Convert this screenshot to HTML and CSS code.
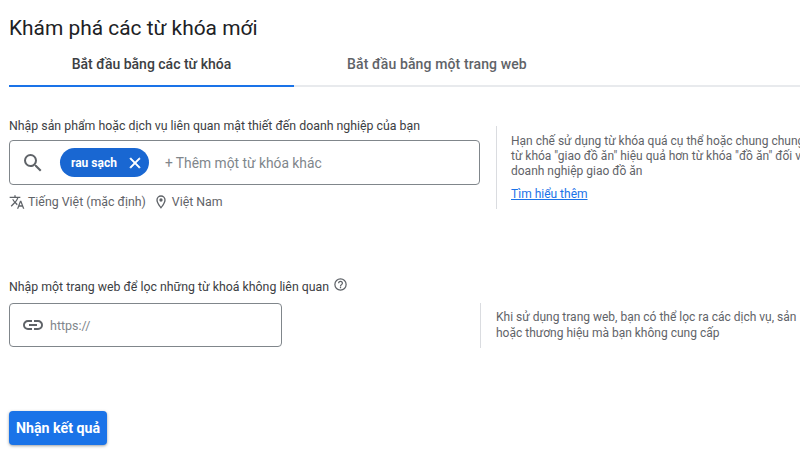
FILE: index.html
```html
<!DOCTYPE html>
<html lang="vi">
<head>
  <meta charset="UTF-8" />
  <title>Khám phá các từ khóa mới</title>
  <link rel="stylesheet" href="styles.css">
</head>
<body>
  <div class="page">
    <h1 class="title">Khám phá các từ khóa mới</h1>

    <div class="tabs">
      <div class="tab active">Bắt đầu bằng các từ khóa</div>
      <div class="tab">Bắt đầu bằng một trang web</div>
    </div>

    <section class="row row-keywords">
      <div class="col">
        <div class="label">Nhập sản phẩm hoặc dịch vụ liên quan mật thiết đến doanh nghiệp của bạn</div>
        <div class="field">
          <svg class="icon-search" viewBox="0 0 24 24" width="24" height="24">
            <path fill="#5f6368" d="M15.5 14h-.79l-.28-.27A6.47 6.47 0 0 0 16 9.5 6.5 6.5 0 1 0 9.5 16c1.61 0 3.09-.59 4.23-1.57l.27.28v.79l5 4.99L20.49 19l-4.99-5zm-6 0C7.01 14 5 11.99 5 9.5S7.01 5 9.5 5 14 7.01 14 9.5 11.99 14 9.5 14z"/>
          </svg>
          <span class="chip">
            rau sạch
            <svg viewBox="0 0 24 24" width="18" height="18">
              <path fill="#fff" stroke="#fff" stroke-width="0.8" d="M19 6.41 17.59 5 12 10.59 6.41 5 5 6.41 10.59 12 5 17.59 6.41 19 12 13.41 17.59 19 19 17.59 13.41 12z"/>
            </svg>
          </span>
          <span class="placeholder">+ Thêm một từ khóa khác</span>
        </div>
        <div class="meta">
          <svg viewBox="0 0 24 24" width="16" height="16">
            <path fill="#5f6368" d="m12.87 15.07-2.54-2.51.03-.03A17.52 17.52 0 0 0 14.07 6H17V4h-7V2H8v2H1v2h11.17C11.5 7.92 10.44 9.75 9 11.35 8.07 10.32 7.3 9.19 6.69 8h-2c.73 1.63 1.73 3.17 2.98 4.56l-5.09 5.02L4 19l5-5 3.11 3.11.76-2.04zM18.5 10h-2L12 22h2l1.12-3h4.75L21 22h2l-4.5-12zm-2.62 7 1.62-4.33L19.12 17h-3.24z"/>
          </svg>
          <span class="meta-text">Tiếng Việt (mặc định)</span>
          <svg class="icon-pin" viewBox="0 0 24 24" width="16" height="16">
            <path fill="#5f6368" d="M12 2a7 7 0 0 0-7 7c0 5.25 7 13 7 13s7-7.75 7-13a7 7 0 0 0-7-7zm0 17c-2-2.6-5-7-5-10a5 5 0 0 1 10 0c0 2.9-2.9 7.3-5 10zm0-12.5a2.5 2.5 0 1 0 0 5 2.5 2.5 0 0 0 0-5z"/>
          </svg>
          <span class="meta-text">Việt Nam</span>
        </div>
      </div>
      <aside class="hint hint-keywords">
        <div>Hạn chế sử dụng từ khóa quá cụ thể hoặc chung chung</div>
        <div>từ khóa "giao đồ ăn" hiệu quả hơn từ khóa "đồ ăn" đối v</div>
        <div>doanh nghiệp giao đồ ăn</div>
        <a class="more" href="#">Tìm hiểu thêm</a>
      </aside>
    </section>

    <section class="row row-site">
      <div class="col">
        <div class="label">
          Nhập một trang web để lọc những từ khoá không liên quan
          <svg class="icon-help" viewBox="0 0 24 24" width="15" height="15">
            <path fill="#5f6368" d="M11 18h2v-2h-2v2zm1-16a10 10 0 1 0 0 20 10 10 0 0 0 0-20zm0 18a8 8 0 1 1 0-16 8 8 0 0 1 0 16zm0-14a4 4 0 0 0-4 4h2a2 2 0 1 1 4 0c0 2-3 1.75-3 5h2c0-2.25 3-2.5 3-5a4 4 0 0 0-4-4z"/>
          </svg>
        </div>
        <div class="field field-site">
          <svg class="icon-link" viewBox="0 0 24 24" width="24" height="24">
            <path fill="#5f6368" d="M3.9 12c0-1.71 1.39-3.1 3.1-3.1h4V7H7a5 5 0 0 0 0 10h4v-1.9H7c-1.71 0-3.1-1.39-3.1-3.1zM8 13h8v-2H8v2zm9-6h-4v1.9h4c1.71 0 3.1 1.39 3.1 3.1s-1.39 3.1-3.1 3.1h-4V17h4a5 5 0 0 0 0-10z"/>
          </svg>
          <span class="placeholder">https://</span>
        </div>
      </div>
      <aside class="hint hint-site">
        <div>Khi sử dụng trang web, bạn có thể lọc ra các dịch vụ, sản</div>
        <div>hoặc thương hiệu mà bạn không cung cấp</div>
      </aside>
    </section>

    <button class="submit">Nhận kết quả</button>
  </div>
</body>
</html>
```

FILE: styles.css
```css
html, body {
  margin: 0;
  padding: 0;
  width: 100%;
  height: 100%;
  background: #fff;
  color: #3c4043;
  font-family: Roboto, "Noto Sans", sans-serif;
  overflow: hidden;
}

.page {
  padding: 14px 0 0 9px;
}

.title {
  margin: 0;
  font-size: 20.9px;
  line-height: 28px;
  font-weight: 400;
  color: #202124;
}

.tabs {
  display: flex;
  border-bottom: 2px solid #e8eaed;
  height: 43px;
}

.tab {
  height: 43px;
  line-height: 44px;
  font-size: 14px;
  font-weight: 500;
  letter-spacing: 0.12px;
  color: #5f6368;
  padding: 0 53px;
  white-space: nowrap;
}

.tab.active {
  width: 179px;
  letter-spacing: 0;
  color: #3c4043;
  border-bottom: 2px solid #1a73e8;
  text-align: center;
}

.row {
  display: flex;
}

.row-keywords {
  margin-top: 30px;
}

.row-site {
  margin-top: 67px;
}

.col {
  width: 471px;
  flex: none;
}

.label {
  font-size: 12.33px;
  line-height: 18px;
  color: #3c4043;
  white-space: nowrap;
}

.field {
  display: flex;
  align-items: center;
  box-sizing: border-box;
  height: 45px;
  margin-top: 5px;
  padding-left: 11px;
  border: 1px solid #80868b;
  border-radius: 4px;
}

.field-site {
  width: 273px;
  height: 44px;
  margin-top: 7px;
}

.chip {
  display: inline-flex;
  align-items: center;
  gap: 9px;
  height: 29px;
  margin-left: 15px;
  padding: 0 5px 0 11px;
  border-radius: 15px;
  background: #1967d2;
  color: #fff;
  font-size: 12px;
  font-weight: 700;
}

.placeholder {
  font-size: 13.8px;
  color: #80868b;
}

.chip + .placeholder {
  margin-left: 16px;
}

.icon-link + .placeholder {
  margin-left: 5px;
  font-size: 12.5px;
}

.meta {
  display: flex;
  align-items: center;
  margin-top: 8px;
  height: 18px;
}

.meta-text {
  font-size: 12.35px;
  color: #5f6368;
  margin-left: 3px;
}

.icon-pin {
  margin-left: 7px;
}

.icon-help {
  vertical-align: 2px;
  margin: -3px 0 -3px 1px;
}

.hint {
  font-size: 12px;
  line-height: 15px;
  color: #5f6368;
  white-space: nowrap;
  border-left: 1px solid #dadce0;
}

.hint-keywords {
  margin: 9px 0 0 16px;
  padding: 8px 0 8px 14px;
  height: 67px;
}

.hint-site {
  margin-top: 25px;
  padding: 6px 0 7px 15px;
  height: 32px;
  line-height: 16px;
}

.more {
  display: block;
  margin-top: 8px;
  color: #1a73e8;
}

.submit {
  display: block;
  box-sizing: border-box;
  width: 98px;
  height: 34px;
  margin-top: 63px;
  padding: 0;
  border: none;
  border-radius: 4px;
  background: #1a73e8;
  color: #fff;
  font-family: Roboto, sans-serif;
  font-size: 14.2px;
  font-weight: 700;
  box-shadow: 0 1px 3px rgba(60, 64, 67, 0.5);
}
```
